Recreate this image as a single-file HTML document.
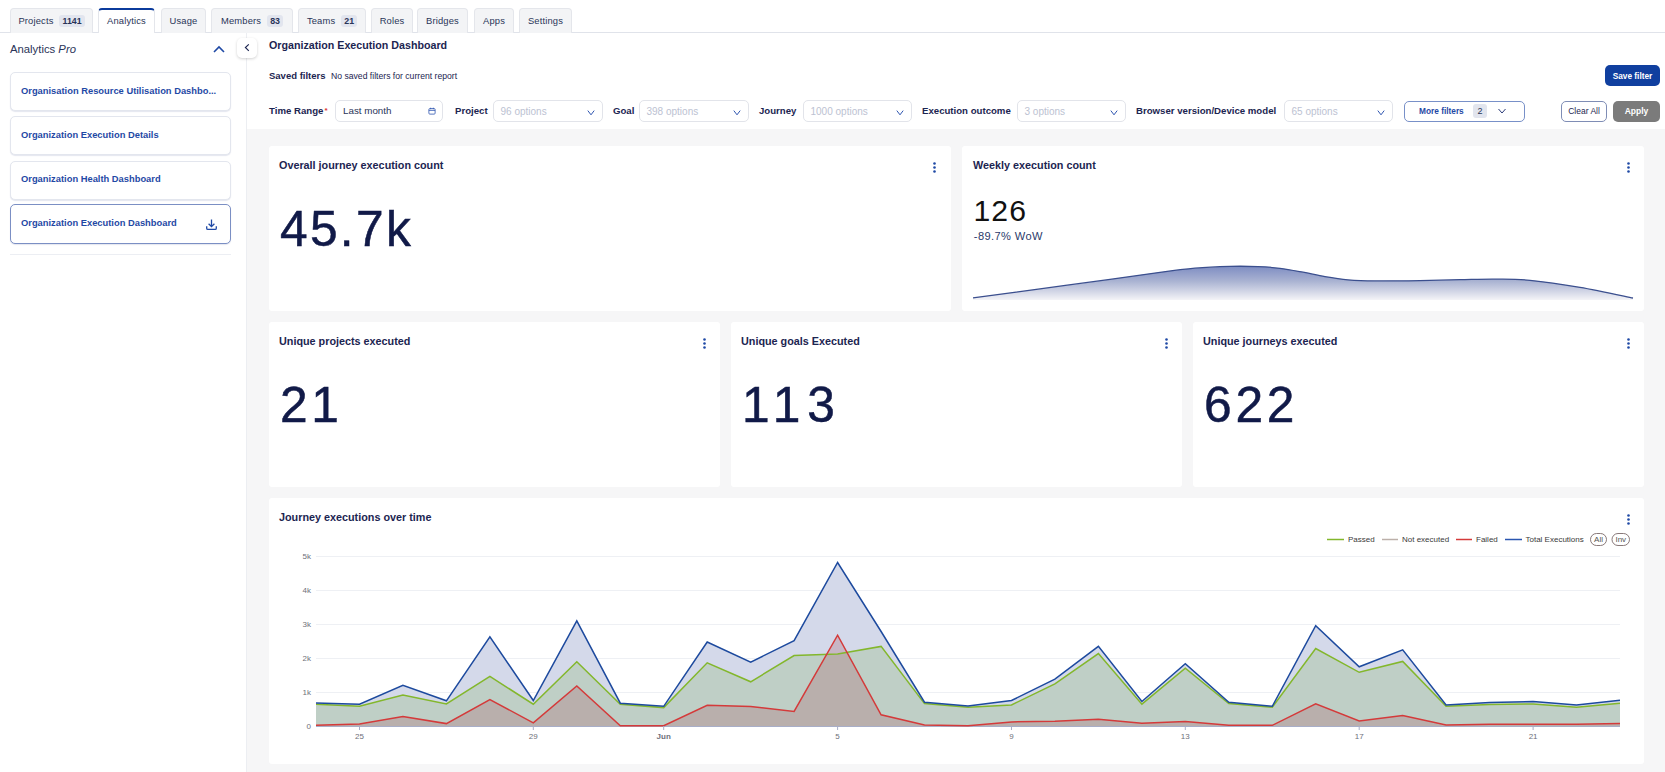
<!DOCTYPE html>
<html><head><meta charset="utf-8">
<style>
*{box-sizing:border-box;margin:0;padding:0}
html,body{width:1665px;height:772px;overflow:hidden;background:#fff;font-family:"Liberation Sans",sans-serif;color:#1c2551}
.abs{position:absolute;white-space:nowrap}
.tab{position:absolute;top:8px;height:25px;background:#f3f4f6;border:1px solid #e4e6eb;border-bottom:none;border-radius:4px 4px 0 0;font-size:9.4px;letter-spacing:0.15px;padding-bottom:1px;color:#2a3458;display:flex;align-items:center;justify-content:center;white-space:nowrap}
.tab.active{background:#fff;border-color:#e4e6eb;border-top:2.5px solid #0b3b9c;padding-top:0;padding-bottom:1.5px;top:7.5px}
.badge{background:#e2e5ee;border-radius:3px;padding:1px 3px;margin-left:6px;font-size:8.8px;letter-spacing:0;font-weight:bold;color:#2a3458}
.side-item{position:absolute;left:10px;width:221px;height:39px;border:1px solid #e3e6ee;border-radius:5px;background:#fff;box-shadow:0 1px 1px rgba(30,50,120,.12);font-size:9.35px;font-weight:bold;color:#1f49a5;padding-left:10px;padding-bottom:2px;display:flex;align-items:center;white-space:nowrap}
.side-item.sel{border:1px solid #7b8fc4}
.lbl{position:absolute;top:104.7px;font-size:9.65px;font-weight:bold;color:#1c2551;white-space:nowrap}
.sel-box{position:absolute;top:100px;height:22px;border:1px solid #e2e4ea;border-radius:5px;background:#fff;font-size:10px;color:#bcc2d2;padding-left:7px;display:flex;align-items:center;white-space:nowrap}
.chev{position:absolute;right:7px;top:8.7px}
.card{position:absolute;background:#fff;border-radius:3px}
.ctitle{position:absolute;left:10px;top:12.5px;font-size:10.8px;font-weight:bold;color:#1c2551;white-space:nowrap}
.dots{position:absolute;top:16px;width:3px;height:11px}
.big{position:absolute;font-size:49.7px;color:#111a48;white-space:nowrap;line-height:1;letter-spacing:2.3px;-webkit-text-stroke:0.5px #111a48}
</style></head>
<body>
<!-- gray main bg -->
<div class="abs" style="left:247px;top:129px;width:1418px;height:643px;background:#f6f6f7"></div>

<!-- tabs -->
<div class="abs" style="left:0;top:32px;width:1665px;height:1px;background:#e0e3ea"></div>
<div class="tab" style="left:10px;width:83px">Projects<span class="badge">1141</span></div>
<div class="tab active" style="left:98px;width:57px;height:25.5px">Analytics</div>
<div class="tab" style="left:161px;width:45px">Usage</div>
<div class="tab" style="left:211px;width:82px">Members<span class="badge">83</span></div>
<div class="tab" style="left:298px;width:68px">Teams<span class="badge">21</span></div>
<div class="tab" style="left:371px;width:42px">Roles</div>
<div class="tab" style="left:417px;width:51px">Bridges</div>
<div class="tab" style="left:474px;width:40px">Apps</div>
<div class="tab" style="left:519px;width:53px">Settings</div>

<!-- sidebar -->
<div class="abs" style="left:246px;top:33px;width:1px;height:739px;background:#eceef2"></div>
<div class="abs" style="left:10px;top:43px;font-size:11.3px;color:#2a3458">Analytics <i>Pro</i></div>
<svg class="abs" style="left:212px;top:44px" width="14" height="10" viewBox="0 0 14 10"><path d="M2 8 L7 3 L12 8" fill="none" stroke="#1f49a5" stroke-width="1.6"/></svg>
<div class="side-item" style="top:72px">Organisation Resource Utilisation Dashbo...</div>
<div class="side-item" style="top:116px">Organization Execution Details</div>
<div class="side-item" style="top:160.5px">Organization Health Dashboard</div>
<div class="side-item sel" style="top:204px;height:40px">Organization Execution Dashboard
<svg class="abs" style="left:194px;top:13px" width="13" height="13" viewBox="0 0 13 13"><path d="M6.5 1.5 V8.5 M3.6 5.8 L6.5 8.6 L9.4 5.8" fill="none" stroke="#1f49a5" stroke-width="1.3"/><path d="M1.7 8.3 V10.2 Q1.7 11.4 2.9 11.4 H10.1 Q11.3 11.4 11.3 10.2 V8.3" fill="none" stroke="#1f49a5" stroke-width="1.3"/></svg></div>
<div class="abs" style="left:10px;top:254px;width:221px;height:1px;background:#eceef3"></div>

<!-- collapse btn -->
<div class="abs" style="left:237px;top:38px;width:20px;height:20px;background:#fff;border-radius:5px;box-shadow:0 1px 3px rgba(0,0,0,.18)"></div>
<svg class="abs" style="left:242px;top:43px" width="10" height="10" viewBox="0 0 10 10"><path d="M6.8 1.3 L3.4 4.5 L6.8 7.8" fill="none" stroke="#1c2551" stroke-width="1.15"/></svg>

<!-- header -->
<div class="abs" style="left:269px;top:38.5px;font-size:10.7px;font-weight:bold;color:#1c2551">Organization Execution Dashboard</div>
<div class="abs" style="left:269px;top:70px;font-size:9.5px;font-weight:bold;color:#1c2551">Saved filters</div>
<div class="abs" style="left:331px;top:71px;font-size:8.65px;color:#1c2551">No saved filters for current report</div>
<div class="abs" style="left:1605px;top:65px;width:55px;height:21px;background:#103f9f;border-radius:5px;color:#fff;font-size:8.3px;font-weight:bold;display:flex;align-items:center;justify-content:center">Save filter</div>

<!-- filters -->
<div class="lbl" style="left:269px">Time Range<span style="color:#d33;font-size:8px;position:relative;top:-0.5px;margin-left:1px">*</span></div>
<div class="sel-box" style="left:335px;width:108px;color:#2a3458;font-size:9.8px"><span style="position:relative;top:-0.3px">Last month</span>
<svg class="abs" style="left:91.5px;top:6px" width="8" height="8" viewBox="0 0 9 9"><rect x="1" y="1.8" width="7" height="6.2" rx="1" fill="none" stroke="#2f56b0" stroke-width="0.9"/><path d="M1 3.8 H8 M3 0.8 V2.5 M6 0.8 V2.5" stroke="#2f56b0" stroke-width="0.9"/></svg></div>

<div class="lbl" style="left:455px">Project</div>
<div class="sel-box" style="left:492.5px;width:110px">96 options<svg class="chev" width="8" height="6" viewBox="0 0 8 6"><path d="M0.8 0.6 L4 4.8 L7.2 0.6" fill="none" stroke="#2f56b0" stroke-width="1"/></svg></div>
<div class="lbl" style="left:613px">Goal</div>
<div class="sel-box" style="left:638.5px;width:110px">398 options<svg class="chev" width="8" height="6" viewBox="0 0 8 6"><path d="M0.8 0.6 L4 4.8 L7.2 0.6" fill="none" stroke="#2f56b0" stroke-width="1"/></svg></div>
<div class="lbl" style="left:759px">Journey</div>
<div class="sel-box" style="left:802.5px;width:109px">1000 options<svg class="chev" width="8" height="6" viewBox="0 0 8 6"><path d="M0.8 0.6 L4 4.8 L7.2 0.6" fill="none" stroke="#2f56b0" stroke-width="1"/></svg></div>
<div class="lbl" style="left:922px">Execution outcome</div>
<div class="sel-box" style="left:1016.5px;width:109px">3 options<svg class="chev" width="8" height="6" viewBox="0 0 8 6"><path d="M0.8 0.6 L4 4.8 L7.2 0.6" fill="none" stroke="#2f56b0" stroke-width="1"/></svg></div>
<div class="lbl" style="left:1136px">Browser version/Device model</div>
<div class="sel-box" style="left:1283.5px;width:109px">65 options<svg class="chev" width="8" height="6" viewBox="0 0 8 6"><path d="M0.8 0.6 L4 4.8 L7.2 0.6" fill="none" stroke="#2f56b0" stroke-width="1"/></svg></div>

<div class="abs" style="left:1404px;top:101px;width:121px;height:21px;border:1px solid #7890c8;border-radius:5px;background:#fff"></div>
<div class="abs" style="left:1419px;top:106px;font-size:8.3px;font-weight:bold;color:#1f49a5">More filters</div>
<div class="abs" style="left:1473px;top:104px;width:14px;height:14px;background:#e2e5ee;border-radius:3px;font-size:9px;color:#2a3458;text-align:center;line-height:14px">2</div>
<svg class="abs" style="left:1497px;top:108px" width="10" height="7" viewBox="0 0 10 7"><path d="M1.5 1 L5 5 L8.5 1" fill="none" stroke="#2a3a78" stroke-width="1"/></svg>
<div class="abs" style="left:1561px;top:101px;width:46px;height:21px;border:1px solid #7f8db5;border-radius:5px;background:#fff;font-size:8.5px;color:#1c2551;display:flex;align-items:center;justify-content:center;padding-bottom:1px">Clear All</div>
<div class="abs" style="left:1613px;top:101px;width:47px;height:21px;background:#7b7b7b;border-radius:5px;font-size:8.5px;font-weight:bold;color:#fff;display:flex;align-items:center;justify-content:center;padding-bottom:1px">Apply</div>

<!-- cards row 1 -->
<div class="card" style="left:269px;top:146px;width:682px;height:165px">
  <div class="ctitle">Overall journey execution count</div>
  <svg class="dots" style="left:664px" viewBox="0 0 3 11"><circle cx="1.5" cy="1.5" r="1.3" fill="#1f49a5"/><circle cx="1.5" cy="5.5" r="1.3" fill="#1f49a5"/><circle cx="1.5" cy="9.5" r="1.3" fill="#1f49a5"/></svg>
  <div class="big" style="left:11px;top:59px">45.7k</div>
</div>
<div class="card" style="left:962px;top:146px;width:682px;height:165px">
  <div class="ctitle" style="left:11px">Weekly execution count</div>
  <svg class="dots" style="left:665px" viewBox="0 0 3 11"><circle cx="1.5" cy="1.5" r="1.3" fill="#1f49a5"/><circle cx="1.5" cy="5.5" r="1.3" fill="#1f49a5"/><circle cx="1.5" cy="9.5" r="1.3" fill="#1f49a5"/></svg>
  <div class="abs" style="left:11.4px;top:50.3px;font-size:30.2px;color:#111;line-height:1;letter-spacing:1.1px">126</div>
  <div class="abs" style="left:11.8px;top:85.4px;font-size:11.1px;color:#2a3a6a;line-height:1;letter-spacing:0.4px">-89.7% WoW</div>
</div>
<svg class="abs" style="left:0;top:0" width="1665" height="772">
<defs><linearGradient id="sg" x1="0" y1="266" x2="0" y2="300" gradientUnits="userSpaceOnUse"><stop offset="0" stop-color="#7d8cc2"/><stop offset="0.45" stop-color="#aab3d2"/><stop offset="0.75" stop-color="#d2d6e6"/><stop offset="1" stop-color="#f4f4f7"/></linearGradient></defs>
<path d="M973 297.9 C984.2 296.4 1017.2 292.0 1040 288.9 C1062.8 285.8 1090.0 282.2 1110 279.4 C1130.0 276.6 1145.8 274.2 1160 272.3 C1174.2 270.4 1183.3 269.2 1195 268.2 C1206.7 267.2 1219.5 266.7 1230 266.4 C1240.5 266.1 1249.7 266.3 1258 266.6 C1266.3 266.9 1272.5 267.4 1280 268.3 C1287.5 269.2 1295.5 270.8 1303 272.2 C1310.5 273.6 1317.5 275.3 1325 276.6 C1332.5 277.9 1339.7 279.1 1348 279.8 C1356.3 280.5 1363.0 280.8 1375 280.9 C1387.0 281.0 1405.8 280.8 1420 280.6 C1434.2 280.4 1447.5 279.9 1460 279.7 C1472.5 279.5 1483.3 279.1 1495 279.2 C1506.7 279.3 1515.8 278.9 1530 280.3 C1544.2 281.7 1562.8 284.4 1580 287.3 C1597.2 290.2 1624.2 296.2 1633 298 L1633 300 L973 300 Z" fill="url(#sg)"/>
<path d="M973 297.9 C984.2 296.4 1017.2 292.0 1040 288.9 C1062.8 285.8 1090.0 282.2 1110 279.4 C1130.0 276.6 1145.8 274.2 1160 272.3 C1174.2 270.4 1183.3 269.2 1195 268.2 C1206.7 267.2 1219.5 266.7 1230 266.4 C1240.5 266.1 1249.7 266.3 1258 266.6 C1266.3 266.9 1272.5 267.4 1280 268.3 C1287.5 269.2 1295.5 270.8 1303 272.2 C1310.5 273.6 1317.5 275.3 1325 276.6 C1332.5 277.9 1339.7 279.1 1348 279.8 C1356.3 280.5 1363.0 280.8 1375 280.9 C1387.0 281.0 1405.8 280.8 1420 280.6 C1434.2 280.4 1447.5 279.9 1460 279.7 C1472.5 279.5 1483.3 279.1 1495 279.2 C1506.7 279.3 1515.8 278.9 1530 280.3 C1544.2 281.7 1562.8 284.4 1580 287.3 C1597.2 290.2 1624.2 296.2 1633 298" fill="none" stroke="#3b4f8e" stroke-width="1.3"/>
</svg>

<!-- cards row 2 -->
<div class="card" style="left:269px;top:322px;width:451px;height:165px">
  <div class="ctitle">Unique projects executed</div>
  <svg class="dots" style="left:434px" viewBox="0 0 3 11"><circle cx="1.5" cy="1.5" r="1.3" fill="#1f49a5"/><circle cx="1.5" cy="5.5" r="1.3" fill="#1f49a5"/><circle cx="1.5" cy="9.5" r="1.3" fill="#1f49a5"/></svg>
  <div class="big" style="left:11px;top:59px;letter-spacing:3.5px">21</div>
</div>
<div class="card" style="left:731px;top:322px;width:451px;height:165px">
  <div class="ctitle">Unique goals Executed</div>
  <svg class="dots" style="left:434px" viewBox="0 0 3 11"><circle cx="1.5" cy="1.5" r="1.3" fill="#1f49a5"/><circle cx="1.5" cy="5.5" r="1.3" fill="#1f49a5"/><circle cx="1.5" cy="9.5" r="1.3" fill="#1f49a5"/></svg>
  <div class="big" style="left:11px;top:59px;letter-spacing:6.8px">113</div>
</div>
<div class="card" style="left:1193px;top:322px;width:451px;height:165px">
  <div class="ctitle">Unique journeys executed</div>
  <svg class="dots" style="left:434px" viewBox="0 0 3 11"><circle cx="1.5" cy="1.5" r="1.3" fill="#1f49a5"/><circle cx="1.5" cy="5.5" r="1.3" fill="#1f49a5"/><circle cx="1.5" cy="9.5" r="1.3" fill="#1f49a5"/></svg>
  <div class="big" style="left:11px;top:59px;letter-spacing:3.8px">622</div>
</div>

<!-- chart card -->
<div class="card" style="left:269px;top:498px;width:1375px;height:266px">
  <div class="ctitle">Journey executions over time</div>
  <svg class="dots" style="left:1358px" viewBox="0 0 3 11"><circle cx="1.5" cy="1.5" r="1.3" fill="#1f49a5"/><circle cx="1.5" cy="5.5" r="1.3" fill="#1f49a5"/><circle cx="1.5" cy="9.5" r="1.3" fill="#1f49a5"/></svg>
</div>
<svg class="abs" style="left:0;top:0;font-family:'Liberation Sans',sans-serif" width="1665" height="772">
<line x1="1327" y1="539.5" x2="1344" y2="539.5" stroke="#83b72c" stroke-width="1.5"/>
<text x="1348" y="541.6" font-size="8" fill="#3a3a3a">Passed</text>
<line x1="1382" y1="539.5" x2="1398" y2="539.5" stroke="#bcb0aa" stroke-width="1.5"/>
<text x="1402" y="541.6" font-size="8" fill="#3a3a3a">Not executed</text>
<line x1="1456" y1="539.5" x2="1472" y2="539.5" stroke="#d43a3a" stroke-width="1.5"/>
<text x="1476" y="541.6" font-size="8" fill="#3a3a3a">Failed</text>
<line x1="1505" y1="539.5" x2="1522" y2="539.5" stroke="#2a56b0" stroke-width="1.5"/>
<text x="1525.5" y="541.6" font-size="8" fill="#3a3a3a">Total Executions</text>
<rect x="1590.5" y="533.5" width="16" height="12" rx="6" fill="none" stroke="#7a6a6a" stroke-width="0.9"/>
<text x="1598.5" y="541.6" font-size="8" fill="#555" text-anchor="middle">All</text>
<rect x="1612" y="533.5" width="17.5" height="12" rx="6" fill="none" stroke="#7a6a6a" stroke-width="0.9"/>
<text x="1620.75" y="541.6" font-size="8" fill="#555" text-anchor="middle">Inv</text>
<text x="311" y="729" text-anchor="end" font-size="8" fill="#6e7079">0</text>
<line x1="316" y1="692.5" x2="1620" y2="692.5" stroke="#eef0f4" stroke-width="1"/>
<text x="311" y="695" text-anchor="end" font-size="8" fill="#6e7079">1k</text>
<line x1="316" y1="658.5" x2="1620" y2="658.5" stroke="#eef0f4" stroke-width="1"/>
<text x="311" y="661" text-anchor="end" font-size="8" fill="#6e7079">2k</text>
<line x1="316" y1="624.5" x2="1620" y2="624.5" stroke="#eef0f4" stroke-width="1"/>
<text x="311" y="627" text-anchor="end" font-size="8" fill="#6e7079">3k</text>
<line x1="316" y1="590.5" x2="1620" y2="590.5" stroke="#eef0f4" stroke-width="1"/>
<text x="311" y="593" text-anchor="end" font-size="8" fill="#6e7079">4k</text>
<line x1="316" y1="556.5" x2="1620" y2="556.5" stroke="#eef0f4" stroke-width="1"/>
<text x="311" y="559" text-anchor="end" font-size="8" fill="#6e7079">5k</text>
<path d="M316.0 702.9 L359.5 704.2 L402.9 685.2 L446.4 700.8 L489.9 636.9 L533.3 700.5 L576.8 620.9 L620.3 703.2 L663.7 706.3 L707.2 642.0 L750.7 662.1 L794.1 640.7 L837.6 562.5 L881.1 631.5 L924.5 702.2 L968.0 705.9 L1011.5 700.5 L1054.9 679.1 L1098.4 646.4 L1141.9 701.5 L1185.3 663.8 L1228.8 702.2 L1272.3 706.3 L1315.7 625.7 L1359.2 666.8 L1402.7 649.8 L1446.1 704.9 L1489.6 702.5 L1533.1 701.5 L1576.5 704.9 L1620.0 700.2 L1620 726 L316 726 Z" fill="#d4d9ea"/>
<path d="M316.0 704.2 L359.5 706.3 L402.9 695.1 L446.4 703.9 L489.9 676.4 L533.3 704.2 L576.8 661.7 L620.3 704.2 L663.7 707.6 L707.2 662.8 L750.7 681.8 L794.1 655.6 L837.6 653.9 L881.1 646.4 L924.5 703.6 L968.0 707.3 L1011.5 704.9 L1054.9 683.8 L1098.4 653.6 L1141.9 704.2 L1185.3 668.2 L1228.8 703.6 L1272.3 707.3 L1315.7 648.5 L1359.2 672.3 L1402.7 661.4 L1446.1 706.3 L1489.6 704.6 L1533.1 703.9 L1576.5 707.3 L1620.0 703.2 L1620 726 L316 726 Z" fill="rgb(142,184,117)" fill-opacity="0.3"/>
<path d="M316.0 725.3 L359.5 724.0 L402.9 716.5 L446.4 723.6 L489.9 699.5 L533.3 722.9 L576.8 685.9 L620.3 725.7 L663.7 725.7 L707.2 705.3 L750.7 706.6 L794.1 711.4 L837.6 635.2 L881.1 714.8 L924.5 725.0 L968.0 725.7 L1011.5 721.9 L1054.9 721.2 L1098.4 719.2 L1141.9 723.3 L1185.3 721.6 L1228.8 725.3 L1272.3 725.3 L1315.7 703.9 L1359.2 720.9 L1402.7 715.5 L1446.1 725.0 L1489.6 724.3 L1533.1 724.3 L1576.5 724.3 L1620.0 723.6 L1620 726 L316 726 Z" fill="rgb(171,104,112)" fill-opacity="0.3"/>
<line x1="316" y1="726.5" x2="1620" y2="726.5" stroke="#a8aec8" stroke-width="1"/>
<path d="M316.0 704.2 L359.5 706.3 L402.9 695.1 L446.4 703.9 L489.9 676.4 L533.3 704.2 L576.8 661.7 L620.3 704.2 L663.7 707.6 L707.2 662.8 L750.7 681.8 L794.1 655.6 L837.6 653.9 L881.1 646.4 L924.5 703.6 L968.0 707.3 L1011.5 704.9 L1054.9 683.8 L1098.4 653.6 L1141.9 704.2 L1185.3 668.2 L1228.8 703.6 L1272.3 707.3 L1315.7 648.5 L1359.2 672.3 L1402.7 661.4 L1446.1 706.3 L1489.6 704.6 L1533.1 703.9 L1576.5 707.3 L1620.0 703.2" fill="none" stroke="#83b72c" stroke-width="1.5"/>
<path d="M316.0 725.3 L359.5 724.0 L402.9 716.5 L446.4 723.6 L489.9 699.5 L533.3 722.9 L576.8 685.9 L620.3 725.7 L663.7 725.7 L707.2 705.3 L750.7 706.6 L794.1 711.4 L837.6 635.2 L881.1 714.8 L924.5 725.0 L968.0 725.7 L1011.5 721.9 L1054.9 721.2 L1098.4 719.2 L1141.9 723.3 L1185.3 721.6 L1228.8 725.3 L1272.3 725.3 L1315.7 703.9 L1359.2 720.9 L1402.7 715.5 L1446.1 725.0 L1489.6 724.3 L1533.1 724.3 L1576.5 724.3 L1620.0 723.6" fill="none" stroke="#d43a3a" stroke-width="1.5"/>
<path d="M316.0 702.9 L359.5 704.2 L402.9 685.2 L446.4 700.8 L489.9 636.9 L533.3 700.5 L576.8 620.9 L620.3 703.2 L663.7 706.3 L707.2 642.0 L750.7 662.1 L794.1 640.7 L837.6 562.5 L881.1 631.5 L924.5 702.2 L968.0 705.9 L1011.5 700.5 L1054.9 679.1 L1098.4 646.4 L1141.9 701.5 L1185.3 663.8 L1228.8 702.2 L1272.3 706.3 L1315.7 625.7 L1359.2 666.8 L1402.7 649.8 L1446.1 704.9 L1489.6 702.5 L1533.1 701.5 L1576.5 704.9 L1620.0 700.2" fill="none" stroke="#1d4a9e" stroke-width="1.5"/>
<line x1="359.5" y1="726" x2="359.5" y2="730" stroke="#a8aec8" stroke-width="1"/>
<text x="359.5" y="739" text-anchor="middle" font-size="8" fill="#6e7079">25</text>
<line x1="533.3" y1="726" x2="533.3" y2="730" stroke="#a8aec8" stroke-width="1"/>
<text x="533.3" y="739" text-anchor="middle" font-size="8" fill="#6e7079">29</text>
<line x1="663.7" y1="726" x2="663.7" y2="730" stroke="#a8aec8" stroke-width="1"/>
<text x="663.7" y="739" text-anchor="middle" font-size="8" fill="#6e7079" font-weight="bold">Jun</text>
<line x1="837.6" y1="726" x2="837.6" y2="730" stroke="#a8aec8" stroke-width="1"/>
<text x="837.6" y="739" text-anchor="middle" font-size="8" fill="#6e7079">5</text>
<line x1="1011.5" y1="726" x2="1011.5" y2="730" stroke="#a8aec8" stroke-width="1"/>
<text x="1011.5" y="739" text-anchor="middle" font-size="8" fill="#6e7079">9</text>
<line x1="1185.3" y1="726" x2="1185.3" y2="730" stroke="#a8aec8" stroke-width="1"/>
<text x="1185.3" y="739" text-anchor="middle" font-size="8" fill="#6e7079">13</text>
<line x1="1359.2" y1="726" x2="1359.2" y2="730" stroke="#a8aec8" stroke-width="1"/>
<text x="1359.2" y="739" text-anchor="middle" font-size="8" fill="#6e7079">17</text>
<line x1="1533.1" y1="726" x2="1533.1" y2="730" stroke="#a8aec8" stroke-width="1"/>
<text x="1533.1" y="739" text-anchor="middle" font-size="8" fill="#6e7079">21</text>
</svg>
</body></html>
